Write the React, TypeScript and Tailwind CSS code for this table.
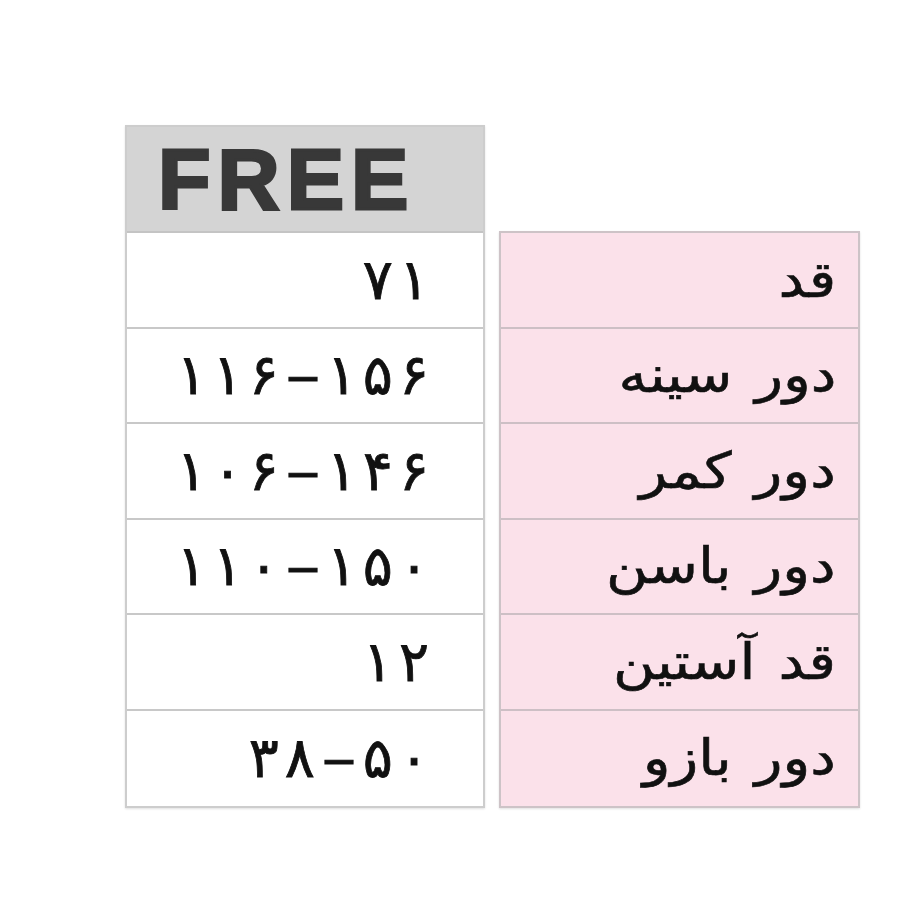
const rows = [
  { label: "قد", value: "۷۱" },
  { label: "دور سینه", value: "۱۱۶–۱۵۶" },
  { label: "دور کمر", value: "۱۰۶–۱۴۶" },
  { label: "دور باسن", value: "۱۱۰–۱۵۰" },
  { label: "قد آستین", value: "۱۲" },
  { label: "دور بازو", value: "۳۸–۵۰" },
];

// Arabic-script digits ignore letter-spacing, so each glyph gets its own box
function Digits({ text }: { text: string }) {
  return (
    <span className="flex items-center gap-[6px] font-['DejaVu_Sans',sans-serif] text-[56px] leading-none text-[#111] [-webkit-text-stroke:0.8px_#111]">
      {Array.from(text).map((ch, i) =>
        ch === "–" ? (
          <span key={i} className="inline-block scale-x-[1.25] px-[4px]">
            {ch}
          </span>
        ) : (
          <span key={i}>{ch}</span>
        )
      )}
    </span>
  );
}

export default function App() {
  return (
    <div className="w-[900px] h-[900px] bg-white pt-[125px] pl-[125px]">
      <div className="flex gap-[14px]">
        {/* sizes column */}
        <div className="w-[360px] flex flex-col border-2 border-[#cdcdcd] shadow-[0_1px_2px_rgba(0,0,0,0.12)]">
          <div className="h-[106px] bg-[#d4d4d4] flex items-center pl-[31px] border-b-2 border-[#c4c4c4]">
            <span className="font-['Liberation_Sans',Arial,sans-serif] font-bold text-[86px] leading-none tracking-[7px] text-[#383838] [-webkit-text-stroke:3px_#383838]">
              FREE
            </span>
          </div>
          {rows.map((r, i) => (
            <div
              key={i}
              dir="ltr"
              className={`h-[95.5px] bg-white flex items-center justify-end pr-[54px] ${i < rows.length - 1 ? "border-b-2 border-[#c8c8c8]" : ""}`}
            >
              <Digits text={r.value} />
            </div>
          ))}
        </div>

        {/* labels column */}
        <div className="w-[361px] mt-[106px] self-start flex flex-col border-2 border-[#cdc3c7] shadow-[0_1px_2px_rgba(0,0,0,0.12)]">
          {rows.map((r, i) => (
            <div
              key={i}
              dir="rtl"
              className={`h-[95.5px] bg-[#fbe1ea] flex items-center pr-[22px] ${i < rows.length - 1 ? "border-b-2 border-[#cdbfc5]" : ""}`}
            >
              <span className="inline-block origin-right scale-x-[1.15] font-['DejaVu_Sans',sans-serif] text-[50px] leading-none [word-spacing:4px] text-[#111] [-webkit-text-stroke:0.6px_#111]">
                {r.label}
              </span>
            </div>
          ))}
        </div>
      </div>
    </div>
  );
}
